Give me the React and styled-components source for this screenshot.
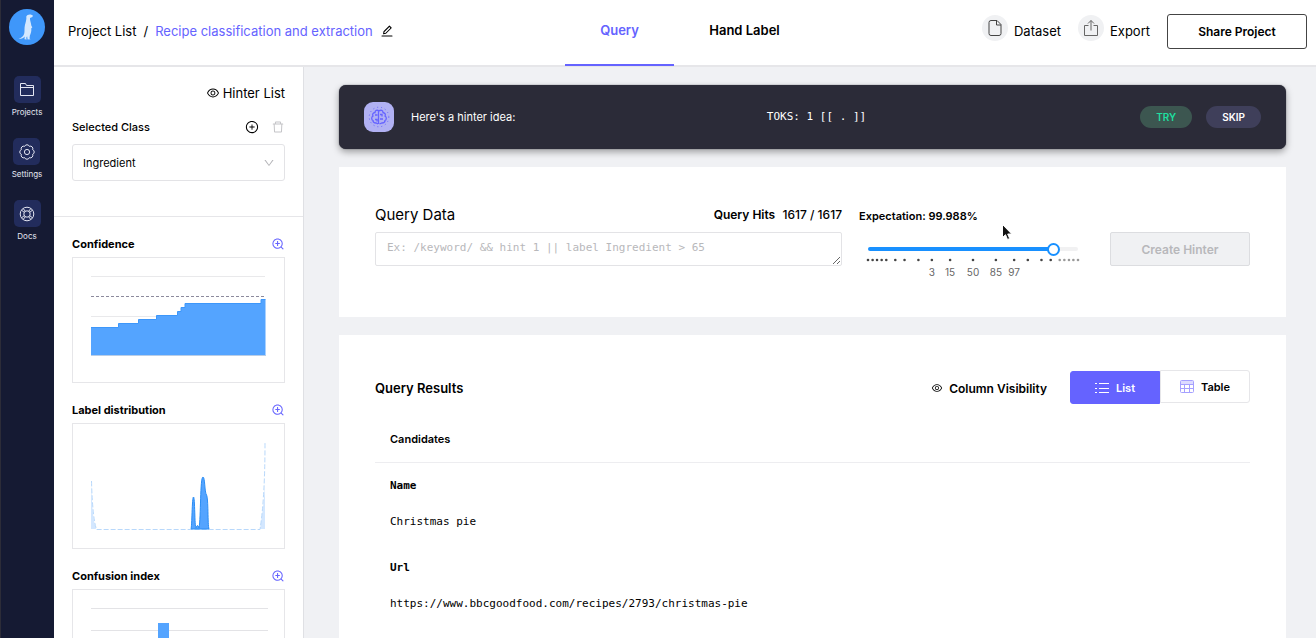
import React, { useState } from 'react';
import styled, { createGlobalStyle } from 'styled-components';
import {
    AiOutlineEye,
    AiOutlinePlusCircle,
    AiOutlineDelete,
    AiOutlineZoomIn,
    AiOutlineEdit,
    AiOutlineDown,
} from 'react-icons/ai';

const sans = "Inter, 'Liberation Sans', sans-serif";
const mono = "'DejaVu Sans Mono', 'Liberation Mono', monospace";

const GlobalStyle = createGlobalStyle`
* {
    box-sizing: border-box;
}
body {
    margin: 0;
    background: #f0f1f4;
    color: #000;
    font-family: ${sans};
    font-size: 12px;
}
h1, h2, h3, p, dl, dd {
    margin: 0;
}
button, input, select, textarea {
    font-family: inherit;
    margin: 0;
}
a {
    color: inherit;
    text-decoration: none;
}
svg {
    display: block;
    flex: none;
}
`;

const Page = styled.div`
display: flex;
height: 100vh;
overflow: hidden;
`;

const Rail = styled.nav`
display: flex;
flex-direction: column;
align-items: center;
flex: none;
width: 54px;
padding: 9px 1px 0 0;
background: #151a33;
border-left: 1px solid #2c2c38;
`;

const RailLink = styled.a`
display: flex;
flex-direction: column;
align-items: center;
height: 62px;
color: #e4e6f2;
font-size: 8px;
line-height: 19px;
`;

const RailIcon = styled.span`
display: flex;
align-items: center;
justify-content: center;
width: 27px;
height: 27px;
border-radius: 5px;
background: #222c5c;
`;

const Logo = styled.a`
margin-bottom: 31px;
`;

const Shell = styled.div`
display: flex;
flex-direction: column;
flex: 1;
min-width: 0;
`;

const Header = styled.header`
display: grid;
grid-template-columns: 1fr auto 1fr;
flex: none;
height: 67px;
background: #fff;
border-bottom: 2px solid #e6e6e9;
`;

const Crumbs = styled.div`
display: flex;
align-items: center;
gap: 7px;
height: 62px;
padding-left: 14px;
font-size: 13px;
line-height: 20px;
white-space: nowrap;
.current {
    color: #6563ff;
}
`;

const IconButton = styled.button`
display: flex;
padding: 0;
border: 0;
background: none;
color: ${(p) => p.$color || '#000'};
`;

const Tabs = styled.nav`
display: flex;
padding-left: 10px;
`;

const Tab = styled.a`
display: flex;
justify-content: center;
width: ${(p) => (p.$active ? 109 : 141)}px;
height: 66px;
padding-top: 20px;
border-bottom: 2px solid ${(p) => (p.$active ? '#6563ff' : 'transparent')};
color: ${(p) => (p.$active ? '#6563ff' : '#000')};
font-size: 13px;
font-weight: 600;
line-height: 20px;
`;

const HeaderActions = styled.div`
display: flex;
align-items: center;
justify-content: flex-end;
gap: 17px;
height: 62px;
padding-right: 9px;
`;

const RoundLink = styled.a`
display: flex;
align-items: center;
gap: 6px;
font-size: 13px;
line-height: 20px;
span {
    display: flex;
    align-items: center;
    justify-content: center;
    width: 26px;
    height: 26px;
    margin-bottom: 6px;
    border-radius: 50%;
    background: #f0f1f3;
}
`;

const ShareButton = styled.button`
width: 140px;
height: 35px;
border: 1px solid #444;
border-radius: 3px;
background: #fff;
color: #000;
font-size: 12px;
font-weight: 600;
`;

const Body = styled.div`
display: flex;
flex: 1;
min-height: 0;
`;

const Side = styled.aside`
flex: none;
width: 250px;
overflow: hidden;
background: #fff;
border-right: 1px solid #dfe0e4;
`;

const ClassPanel = styled.section`
height: 150px;
padding: 16px 18px 0;
border-bottom: 1px solid #e6e6e9;
`;

const HinterLink = styled.a`
display: flex;
align-items: center;
justify-content: flex-end;
gap: 3px;
font-size: 13px;
line-height: 20px;
`;

const SideRow = styled.div`
display: flex;
align-items: center;
justify-content: space-between;
height: 26px;
`;

const ClassRow = styled(SideRow)`
height: 41px;
padding-top: 6px;
`;

const Group = styled.div`
display: flex;
align-items: center;
gap: ${(p) => p.$gap}px;
`;

const Label = styled.label`
font-size: 11px;
font-weight: 500;
`;

const SelectBox = styled.div`
display: grid;
align-items: center;
select, svg {
    grid-area: 1 / 1;
}
select {
    appearance: none;
    width: 100%;
    height: 37px;
    padding: 0 10px;
    border: 1px solid #e3e3e6;
    border-radius: 3px;
    background: #fff;
    color: #000;
    font-size: 11px;
}
svg {
    justify-self: end;
    margin-right: 10px;
    color: #b4b4b8;
    pointer-events: none;
}
`;

const Charts = styled.div`
padding-top: 14px;
`;

const ChartSection = styled.section`
height: 166px;
padding: 0 18px;
`;

const SideTitle = styled.h3`
font-size: 11px;
font-weight: 700;
`;

const ChartFrame = styled.div`
height: 126px;
border: 1px solid #e6e6e9;
svg {
    width: 100%;
    height: 100%;
}
`;

const Main = styled.main`
display: flex;
flex: 1;
flex-direction: column;
gap: 18px;
min-width: 0;
padding: 18px 30px 0 35px;
overflow: hidden;
`;

const HintBar = styled.section`
display: grid;
grid-template-columns: 1fr auto 1fr;
align-items: center;
flex: none;
height: 64px;
padding: 0 25px;
border-radius: 7px;
background: #2b2b38;
box-shadow: 0 3px 7px rgba(0, 0, 0, 0.35), 0 0 1px #2b2b38;
color: #fff;
font-size: 11px;
code {
    padding-left: 8px;
    font-family: ${mono};
    font-size: 11px;
    line-height: 16px;
}
`;

const HintActions = styled.div`
display: flex;
justify-content: flex-end;
gap: 14px;
`;

const Pill = styled.button`
height: 22px;
padding: 0 16px;
border: 0;
border-radius: 11px;
background: ${(p) => (p.$go ? '#3c5650' : '#3f3f5a')};
color: ${(p) => (p.$go ? '#1fdf9f' : '#fff')};
font-size: 10px;
font-weight: 600;
`;

const QueryCard = styled.section`
display: grid;
grid-template-columns: minmax(0, 467px) minmax(0, 1fr) 140px;
flex: none;
height: 150px;
padding: 37px 36px 0;
background: #fff;
`;

const QueryHead = styled.div`
display: flex;
align-items: center;
justify-content: space-between;
height: 28px;
padding-bottom: 8px;
h2 {
    font-size: 15px;
    font-weight: 400;
}
div {
    font-size: 12px;
    font-weight: 500;
}
b {
    margin-right: 4px;
    font-weight: 600;
}
`;

const QueryInput = styled.textarea`
display: block;
width: 100%;
height: 34px;
padding: 7px 11px;
border: 1px solid #e3e3e6;
border-radius: 2px;
background: #fff;
font-family: ${mono};
font-size: 11px;
line-height: 16px;
overflow: hidden;
resize: vertical;
&::placeholder {
    color: #b8b8bb;
}
`;

const Expectation = styled.div`
padding: 4px 32px 0 17px;
label {
    display: block;
    margin-bottom: 17px;
    font-size: 11px;
    font-weight: 600;
    line-height: 17px;
}
`;

const SliderBox = styled.div`
padding-left: 9px;
`;

const Slider = styled.input`
appearance: none;
display: block;
width: 100%;
height: 14px;
background: none;
&::-webkit-slider-runnable-track {
    height: 4px;
    border-radius: 2px;
    background: linear-gradient(90deg, #1890ff 89%, #f1f1f2 89%);
}
&::-webkit-slider-thumb {
    appearance: none;
    width: 13px;
    height: 13px;
    margin-top: -4px;
    border: 2px solid #1890ff;
    border-radius: 50%;
    background: #fff;
}
`;

const Marks = styled.svg`
width: 100%;
height: 26px;
overflow: visible;
text {
    fill: #666;
    font-size: 10px;
    text-anchor: middle;
}
`;

const CreateButton = styled.button`
height: 34px;
margin-top: 28px;
border: 1px solid #dcdde0;
border-radius: 2px;
background: #f0f1f3;
color: #b8b8bb;
font-size: 12px;
font-weight: 600;
`;

const ResultsCard = styled.section`
flex: 1 0 auto;
padding: 36px 36px 0;
background: #fff;
`;

const ResultsHead = styled.div`
display: flex;
align-items: center;
justify-content: space-between;
height: 34px;
h2 {
    font-size: 13px;
    font-weight: 600;
}
`;

const TextButton = styled.button`
display: flex;
align-items: center;
gap: 6px;
padding: 0;
border: 0;
background: none;
color: #000;
font-size: 12px;
font-weight: 600;
`;

const Toggle = styled.div`
display: flex;
padding-bottom: 2px;
`;

const ToggleButton = styled.button`
display: flex;
align-items: center;
justify-content: center;
gap: 7px;
width: 90px;
height: 33px;
margin-top: ${(p) => (p.$active ? 1 : 0)}px;
border: 1px solid ${(p) => (p.$active ? '#6563ff' : '#e6e6e9')};
border-radius: ${(p) => (p.$active ? '3px 0 0 3px' : '0 3px 3px 0')};
background: ${(p) => (p.$active ? '#6563ff' : '#fff')};
color: ${(p) => (p.$active ? '#fff' : '#000')};
font-size: 11px;
font-weight: 600;
`;

const ColumnHead = styled.h3`
height: 58px;
padding: 26px 15px 0;
border-bottom: 1px solid #ededf0;
font-size: 11px;
font-weight: 600;
line-height: 16px;
`;

const Fields = styled.dl`
padding: 15px 15px 0;
font-family: ${mono};
font-size: 11px;
line-height: 16px;
dt {
    font-weight: 700;
}
dd {
    margin: 20px 0 30px;
}
`;

const Pointer = styled.svg`
position: fixed;
top: 223px;
left: 1001px;
pointer-events: none;
`;

const LogoMark = () => (
    <svg width="36" height="36" viewBox="0 0 36 36">
        <circle cx="18" cy="18" r="18" fill="#3f97fa" />
        <path
            d="M17.3 7.4c.5-1.700 3.200-2.400 5-1.700l1.600.9-.5 1.500-2.400.8c-.3 2.300 1.100 4.600 1.300 7.600l1 2-1 .7c.3 3.300-.5 5.200-1.400 7.300l-.4 2.900 1.100.9-3 .1-.5-3.200-.9 1.900.5 1.300-2.200-.1.200-2.900c-1.200 1.500-3.300 2.500-6.200 2.300 3-.8 5.200-2.700 5.800-5.500.5-2.700-.1-5 .6-8 .6-2.700 1.900-5.700 1.400-8.800z"
            fill="#d5e8fe"
        />
    </svg>
);

const FolderIcon = () => (
    <svg width="16" height="16" viewBox="0 0 16 16" fill="none" stroke="#e4e6f2" strokeLinejoin="round">
        <path d="M1.500 13.500v-12h5l1 2h7v10zM1.500 5.500h13" />
    </svg>
);

const GearIcon = () => (
    <svg width="16" height="16" viewBox="0 0 16 16" fill="none" stroke="#e4e6f2" strokeLinejoin="round">
        <path d="M13.640 5.670a2.500 2.500 0 0 1 0 4.660a2.500 2.500 0 0 1-3.310 3.310a2.500 2.500 0 0 1-4.660 0a2.500 2.500 0 0 1-3.310-3.310a2.500 2.500 0 0 1 0-4.660a2.500 2.500 0 0 1 3.310-3.310a2.500 2.500 0 0 1 4.660 0a2.500 2.500 0 0 1 3.310 3.310z" />
        <circle cx="8" cy="8" r="2.600" />
    </svg>
);

const BuoyIcon = () => (
    <svg width="16" height="16" viewBox="0 0 16 16" fill="none" stroke="#e4e6f2">
        <circle cx="8" cy="8" r="6.800" />
        <circle cx="8" cy="8" r="3.200" />
        <path d="M2.700 4.300l2.500 2M4.300 2.700l2 2.500M13.300 4.300l-2.500 2M11.700 2.700l-2 2.500M2.700 11.700l2.500-2M4.300 13.300l2-2.500M13.300 11.700l-2.500-2M11.700 13.300l-2-2.500" />
    </svg>
);

const FileIcon = () => (
    <svg width="16" height="16" viewBox="0 0 16 16" fill="none" stroke="#444">
        <path d="M4 .5h6l4 4v9q0 2-2 2h-8q-2 0-2-2v-11q0-2 2-2M9.500.5v4.500h4.500" />
    </svg>
);

const ExportIcon = () => (
    <svg width="18" height="18" viewBox="0 0 18 18" fill="none" stroke="#666">
        <path d="M6.500 6.500h-4v10h13v-10h-4M9 11.500V1.500M6 4.500l3-3 3 3" />
    </svg>
);

const BrainIcon = () => (
    <svg width="30" height="30" viewBox="0 0 30 30" fill="none" stroke="#6563ff">
        <rect width="30" height="30" rx="9" fill="#b1b1f3" stroke="none" />
        <circle cx="15" cy="15" r="9.800" strokeDasharray="1 3" />
        <path
            d="M14.500 9v13M15 9c-2-1.500-4-.5-4 1.500-2 0-3 2-2 3.500-2 1-1.500 4 0 4.500 0 2 2 2.500 3 2.500l2 1M15 9c2-1.500 4-.5 4 1.500 2 .5 3 2 2 3.500 2 1 1.500 4 0 4.500 0 2-2 2.500-3 2.500l-2.500 1M11 13h2.500M11 17.500h2v2M16 12.500h2v2M16 17h3"
            strokeWidth="1.300"
        />
    </svg>
);

const ListIcon = () => (
    <svg width="14" height="12" viewBox="0 0 14 12" stroke="#fff">
        <path d="M0 1.500h2M0 6.500h2M0 10.500h2M4 1.500h10M4 6.500h10M4 10.500h10" />
    </svg>
);

const TableIcon = () => (
    <svg width="14" height="14" viewBox="0 0 14 14" fill="none" stroke="#a5a0ff">
        <path d="M1 2.500h12" stroke="#dddbff" strokeWidth="3" />
        <rect x=".5" y=".5" width="13" height="12" rx="1" />
        <path d="M1 4.500h12M1 8.500h12M4.500 4v9M9.500 4v9" />
    </svg>
);

const ConfidenceChart = () => (
    <svg viewBox="0 0 211 124" preserveAspectRatio="none">
        <path d="M18 18.500h174M18 58.500h174" stroke="#e9e9eb" />
        <path d="M18 97V69.500h27.500v-4h20v-4h18v-4h21v-4h3.500v-4h4v-4h76v-4h4.500V97z" fill="#54a4ff" />
        <path d="M18 69.500h27.500v-4h20v-4h18v-4h21v-4h3.500v-4h4v-4h76v-4h4.500" fill="none" stroke="#3d97fa" />
        <path d="M18 97.500h175" stroke="#b9cde6" />
        <path d="M18 38.500h174" stroke="#8c8a9c" strokeDasharray="3 2" />
    </svg>
);

const DistributionChart = () => (
    <svg viewBox="0 0 211 124" preserveAspectRatio="none">
        <path d="M18 56q1 38 5 49h-5zM187 105q5-32 5-50v50z" fill="#d3e7ff" />
        <path
            d="M18.500 57q1 37 5 48.500h163.500q5-32 5-87"
            fill="none"
            stroke="#b8d8fb"
            strokeDasharray="5 2"
        />
        <path
            d="M118 105c1-2 1-32 2.500-32s1 30 2.500 31q1.500-5 3 0c2-10 1-51 4-51 2 0 1.500 15 3.500 18s1 30 2.500 34z"
            fill="#54a4ff"
            stroke="#2a8df5"
        />
    </svg>
);

const ConfusionChart = () => (
    <svg viewBox="0 0 211 124" preserveAspectRatio="none">
        <path d="M18 18.500h177M18 40.500h177" stroke="#e3e3e6" />
        <path d="M85 33h11v70H85z" fill="#54a4ff" />
    </svg>
);

const charts = [
    { title: 'Confidence', Chart: ConfidenceChart },
    { title: 'Label distribution', Chart: DistributionChart },
    { title: 'Confusion index', Chart: ConfusionChart },
];

// positions in percent of the track, labels only on the middle marks
const marks = [
    [0], [2.2], [4.3], [6.5], [8.7], [13], [17.4], [24],
    [30.4, '3'], [39.1, '15'], [50, '50'], [60.9, '85'], [69.6, '97'],
    [76.1], [82.6], [87], [91.3], [93.5], [95.7], [97.8], [100],
];

const App = () => {
    const [level, setLevel] = useState(91);

    return (
        <Page>
            <GlobalStyle />
            <Rail>
                <Logo href="#home" aria-label="Home"><LogoMark /></Logo>
                <RailLink href="#projects">
                    <RailIcon><FolderIcon /></RailIcon>
                    Projects
                </RailLink>
                <RailLink href="#settings">
                    <RailIcon><GearIcon /></RailIcon>
                    Settings
                </RailLink>
                <RailLink href="#docs">
                    <RailIcon><BuoyIcon /></RailIcon>
                    Docs
                </RailLink>
            </Rail>
            <Shell>
                <Header>
                    <Crumbs>
                        <a href="#list">Project List</a>
                        <span>/</span>
                        <a className="current" href="#project">Recipe classification and extraction</a>
                        <IconButton aria-label="Rename project"><AiOutlineEdit size={14} /></IconButton>
                    </Crumbs>
                    <Tabs>
                        <Tab href="#query" $active>Query</Tab>
                        <Tab href="#label">Hand Label</Tab>
                    </Tabs>
                    <HeaderActions>
                        <RoundLink href="#dataset"><span><FileIcon /></span>Dataset</RoundLink>
                        <RoundLink href="#export"><span><ExportIcon /></span>Export</RoundLink>
                        <ShareButton>Share Project</ShareButton>
                    </HeaderActions>
                </Header>
                <Body>
                    <Side>
                        <ClassPanel>
                            <HinterLink href="#hinters"><AiOutlineEye size={14} />Hinter List</HinterLink>
                            <ClassRow>
                                <Label htmlFor="class">Selected Class</Label>
                                <Group $gap={12}>
                                    <IconButton aria-label="Add class"><AiOutlinePlusCircle size={14} /></IconButton>
                                    <IconButton aria-label="Delete class" $color="#c4c4c7"><AiOutlineDelete size={14} /></IconButton>
                                </Group>
                            </ClassRow>
                            <SelectBox>
                                <select id="class">
                                    <option>Ingredient</option>
                                </select>
                                <AiOutlineDown size={12} />
                            </SelectBox>
                        </ClassPanel>
                        <Charts>
                            {charts.map(({ title, Chart }) => (
                                <ChartSection key={title}>
                                    <SideRow>
                                        <SideTitle>{title}</SideTitle>
                                        <IconButton aria-label={`Zoom ${title}`} $color="#6563ff"><AiOutlineZoomIn size={14} /></IconButton>
                                    </SideRow>
                                    <ChartFrame><Chart /></ChartFrame>
                                </ChartSection>
                            ))}
                        </Charts>
                    </Side>
                    <Main>
                        <HintBar>
                            <Group $gap={17}>
                                <BrainIcon />
                                Here's a hinter idea:
                            </Group>
                            <code>TOKS: 1 [[ . ]]</code>
                            <HintActions>
                                <Pill $go>TRY</Pill>
                                <Pill>SKIP</Pill>
                            </HintActions>
                        </HintBar>
                        <QueryCard>
                            <div>
                                <QueryHead>
                                    <h2><label htmlFor="query">Query Data</label></h2>
                                    <div><b>Query Hits</b> 1617 / 1617</div>
                                </QueryHead>
                                <QueryInput id="query" placeholder="Ex: /keyword/ && hint 1 || label Ingredient > 65" />
                            </div>
                            <Expectation>
                                <label htmlFor="expectation">Expectation: 99.988%</label>
                                <SliderBox>
                                    <Slider
                                        id="expectation"
                                        type="range"
                                        value={level}
                                        onChange={(e) => setLevel(e.target.value)}
                                    />
                                    <Marks>
                                        {marks.map(([at, text]) => (
                                            <React.Fragment key={at}>
                                                <circle cx={`${at}%`} cy="4" r="1.300" fill={at > 91 ? '#999' : '#444'} />
                                                {text && <text x={`${at}%`} y="20">{text}</text>}
                                            </React.Fragment>
                                        ))}
                                    </Marks>
                                </SliderBox>
                            </Expectation>
                            <CreateButton disabled>Create Hinter</CreateButton>
                        </QueryCard>
                        <ResultsCard>
                            <ResultsHead>
                                <h2>Query Results</h2>
                                <Group $gap={23}>
                                    <TextButton><AiOutlineEye size={12} />Column Visibility</TextButton>
                                    <Toggle>
                                        <ToggleButton $active><ListIcon />List</ToggleButton>
                                        <ToggleButton><TableIcon />Table</ToggleButton>
                                    </Toggle>
                                </Group>
                            </ResultsHead>
                            <ColumnHead>Candidates</ColumnHead>
                            <Fields>
                                <dt>Name</dt>
                                <dd>Christmas pie</dd>
                                <dt>Url</dt>
                                <dd>https://www.bbcgoodfood.com/recipes/2793/christmas-pie</dd>
                            </Fields>
                        </ResultsCard>
                    </Main>
                </Body>
            </Shell>
            <Pointer width="12" height="18" viewBox="0 0 12 18">
                <path d="M1.500 1.500v13l3-2.800 2 4.800 2.200-1-2-4.500h4z" fill="#111" stroke="#fff" />
            </Pointer>
        </Page>
    );
};

export default App;
